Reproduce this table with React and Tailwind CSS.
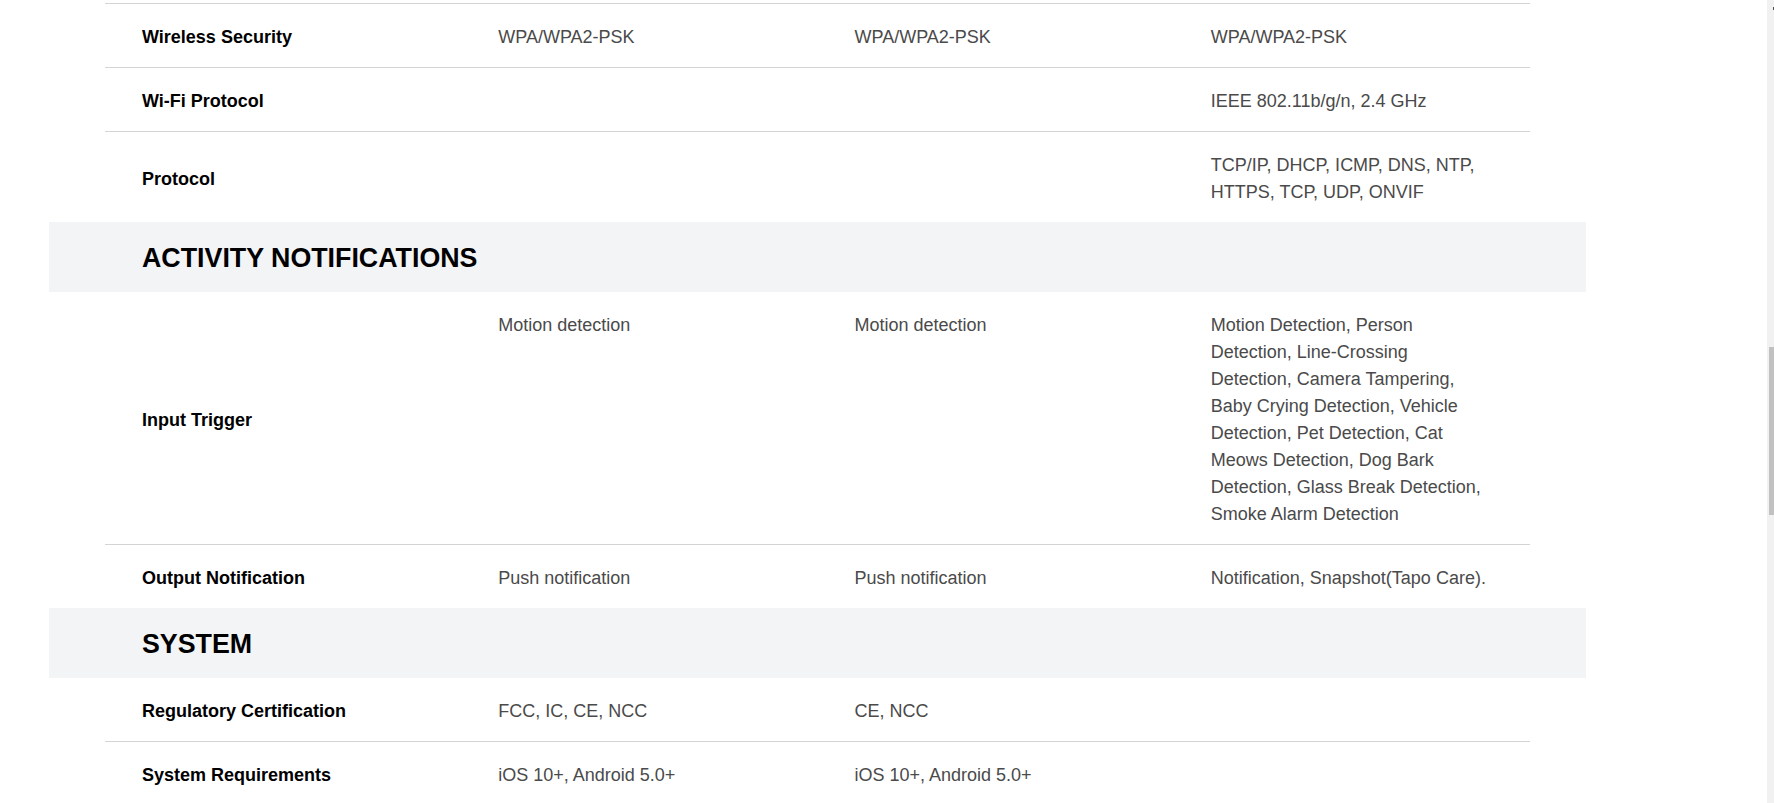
import React from 'react'

const sections = [
  {
    title: null,
    rows: [
      { label: 'Wireless Security', values: ['WPA/WPA2-PSK', 'WPA/WPA2-PSK', 'WPA/WPA2-PSK'] },
      { label: 'Wi-Fi Protocol', values: ['', '', 'IEEE 802.11b/g/n, 2.4 GHz'] },
      { label: 'Protocol', values: ['', '', 'TCP/IP, DHCP, ICMP, DNS, NTP, HTTPS, TCP, UDP, ONVIF'] },
    ],
  },
  {
    title: 'ACTIVITY NOTIFICATIONS',
    rows: [
      {
        label: 'Input Trigger',
        values: [
          'Motion detection',
          'Motion detection',
          'Motion Detection, Person Detection, Line-Crossing Detection, Camera Tampering, Baby Crying Detection, Vehicle Detection, Pet Detection, Cat Meows Detection, Dog Bark Detection, Glass Break Detection, Smoke Alarm Detection',
        ],
      },
      { label: 'Output Notification', values: ['Push notification', 'Push notification', 'Notification, Snapshot(Tapo Care).'] },
    ],
  },
  {
    title: 'SYSTEM',
    rows: [
      { label: 'Regulatory Certification', values: ['FCC, IC, CE, NCC', 'CE, NCC', ''] },
      { label: 'System Requirements', values: ['iOS 10+, Android 5.0+', 'iOS 10+, Android 5.0+', ''] },
    ],
  },
]

const SpecRow = ({ row, first }) => (
  <div className={`grid grid-cols-4 ${first ? '' : 'border-t border-[#d4d4d4]'}`}>
    <div className="flex items-center px-[37px] pt-[20px] pb-[16px] text-[18px] leading-[27px] font-bold text-black">
      {row.label}
    </div>
    {row.values.map((v, idx) => (
      <div key={idx} className="px-[37px] pt-[20px] pb-[16px] text-[18px] leading-[27px] text-[#4a4a4a]">
        {v}
      </div>
    ))}
  </div>
)

export default function App() {
  return (
    <div
      className="flex h-[803px] w-full overflow-hidden bg-white"
      style={{ fontFamily: '"Liberation Sans", Arial, sans-serif' }}
    >
      <div className="flex-1">
        <div className="ml-[49px] w-[1537px] pt-[3px]">
          {sections.map((section, sIdx) => (
            <div key={sIdx}>
              {section.title && (
                <div className="flex h-[70px] items-center bg-[#f3f4f6] pl-[93px] pt-[2px]">
                  <h2 className="text-[26.8px] font-bold text-black">{section.title}</h2>
                </div>
              )}
              <div className="mx-[56px]">
                {section.rows.map((row, rIdx) => (
                  <SpecRow key={rIdx} row={row} first={rIdx === 0 && section.title} />
                ))}
              </div>
            </div>
          ))}
        </div>
      </div>

      {/* scrollbar, cut off by the window edge */}
      <div className="relative w-[7px] bg-[#f1f1f1]">
        <div className="absolute right-0 top-[7px] h-[3px] w-px bg-[#505050]" />
        <div className="absolute right-0 top-[347px] h-[168px] w-[5px] bg-[#c1c1c1]" />
      </div>
    </div>
  )
}
